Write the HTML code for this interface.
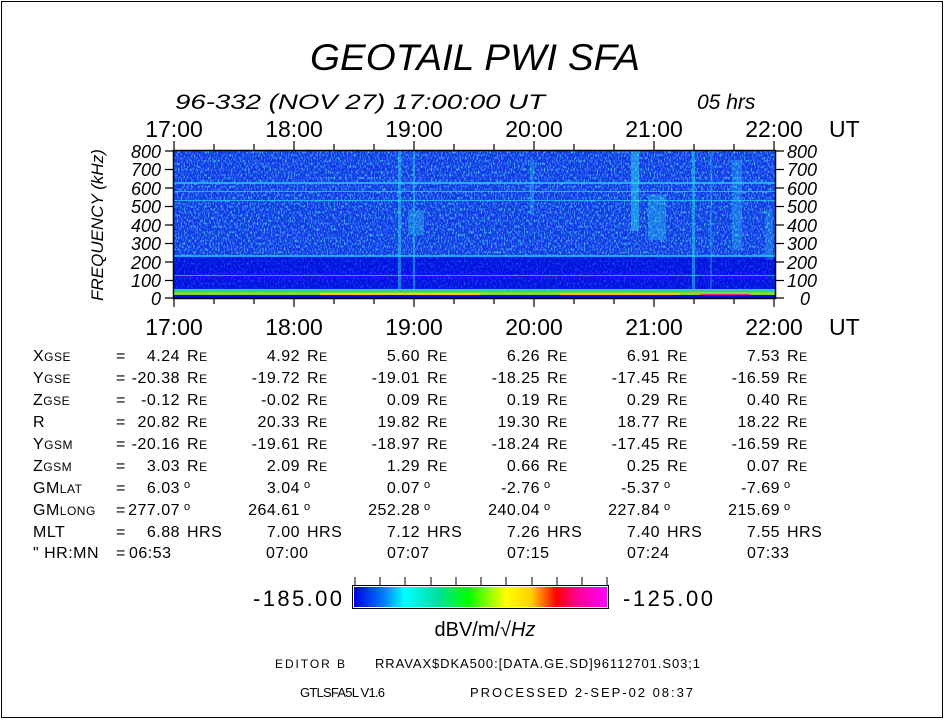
<!DOCTYPE html>
<html><head><meta charset="utf-8"><style>
html,body{margin:0;padding:0;background:#fff}
svg{display:block}
text{font-family:"Liberation Sans",sans-serif;fill:#000}
.t{font-size:23px}
.i{font-style:italic}
.d{font-size:16px;letter-spacing:0.5px}
</style></head><body>
<svg width="945" height="720" viewBox="0 0 945 720" xmlns="http://www.w3.org/2000/svg">
<defs>
<linearGradient id="cb" x1="0" x2="1" y1="0" y2="0">
<stop offset="0" stop-color="#0000e0"/>
<stop offset="0.12" stop-color="#0080ff"/>
<stop offset="0.2" stop-color="#00ffff"/>
<stop offset="0.33" stop-color="#00e0a0"/>
<stop offset="0.45" stop-color="#00ff00"/>
<stop offset="0.6" stop-color="#ffff00"/>
<stop offset="0.7" stop-color="#ffd000"/>
<stop offset="0.8" stop-color="#ff0000"/>
<stop offset="0.88" stop-color="#ff0090"/>
<stop offset="1" stop-color="#ff00ff"/>
</linearGradient>
<filter id="nz" x="0" y="0" width="1" height="1">
<feTurbulence type="fractalNoise" baseFrequency="0.7 0.35" numOctaves="2" seed="3"/>
<feColorMatrix values="0 0 0 0 0.1  0 0 0 0 0.75  0 0 0 0 1  0 0 0 3.2 -1.5"/>
</filter>
</defs>
<rect x="1.5" y="1.5" width="941" height="716" fill="none" stroke="#000" stroke-width="1"/>

<text x="475" y="70" text-anchor="middle" class="i" font-size="37" textLength="330" lengthAdjust="spacingAndGlyphs">GEOTAIL  PWI  SFA</text>
<text x="175" y="109" class="i" font-size="21" textLength="370" lengthAdjust="spacingAndGlyphs">96-332  (NOV 27)  17:00:00  UT</text>
<text x="697" y="109" class="i" font-size="21">05  hrs</text>

<g text-anchor="middle">
<text x="174" y="137" class="t">17:00</text><text x="294" y="137" class="t">18:00</text><text x="414" y="137" class="t">19:00</text><text x="534" y="137" class="t">20:00</text><text x="654" y="137" class="t">21:00</text><text x="774" y="137" class="t">22:00</text>
<text x="174" y="335" class="t">17:00</text><text x="294" y="335" class="t">18:00</text><text x="414" y="335" class="t">19:00</text><text x="534" y="335" class="t">20:00</text><text x="654" y="335" class="t">21:00</text><text x="774" y="335" class="t">22:00</text>
</g>
<text x="829" y="137" class="t">UT</text>
<text x="829" y="335" class="t">UT</text>

<!-- spectrogram -->
<rect x="174" y="151" width="601" height="105" fill="#1238e4"/>
<rect x="174" y="151" width="601" height="105" filter="url(#nz)" opacity="0.8"/>
<rect x="174" y="256" width="601" height="37" fill="#0010e0"/>
<rect x="174" y="256" width="601" height="37" filter="url(#nz)" opacity="0.3"/>
<g fill="#20c8f0" opacity="0.8">
<rect x="174" y="182" width="601" height="2"/>
<rect x="174" y="191" width="601" height="1"/>
<rect x="174" y="200" width="601" height="1"/>
<rect x="174" y="255" width="601" height="2"/>
<rect x="174" y="275" width="601" height="1"/>
</g>
<g fill="#30e8f0" opacity="0.45">
<rect x="398" y="151" width="3" height="142"/>
<rect x="413" y="151" width="2" height="142"/>
<rect x="408" y="210" width="16" height="25" opacity="0.6"/>
<rect x="530" y="160" width="4" height="55" opacity="0.6"/>
<rect x="631" y="151" width="8" height="80"/>
<rect x="648" y="195" width="18" height="45" opacity="0.7"/>
<rect x="692" y="151" width="3" height="142"/>
<rect x="710" y="151" width="2" height="142" opacity="0.6"/>
<rect x="732" y="160" width="10" height="90" opacity="0.6"/>
<rect x="765" y="210" width="8" height="50" opacity="0.5"/>
</g>
<rect x="174" y="289" width="601" height="4" fill="#30c8b0"/>
<rect x="174" y="292" width="601" height="3" fill="#80d840"/>
<rect x="320" y="293" width="160" height="2" fill="#e8d020"/>
<rect x="560" y="293" width="120" height="2" fill="#e8c820"/>
<rect x="700" y="294" width="50" height="2" fill="#ff2080"/>
<rect x="174" y="295" width="601" height="3" fill="#0010e0"/>
<rect x="173.5" y="150.5" width="602" height="148" fill="none" stroke="#000" stroke-width="1.5"/>

<g stroke="#000" stroke-width="1.2">
<path d="M174 141V150M214 144V150M254 144V150M294 141V150M334 144V150M374 144V150M414 141V150M454 144V150M494 144V150M534 141V150M574 144V150M614 144V150M654 141V150M694 144V150M734 144V150M774 141V150"/>
<path d="M174 298V307M214 298V304M254 298V304M294 298V307M334 298V304M374 298V304M414 298V307M454 298V304M494 298V304M534 298V307M574 298V304M614 298V304M654 298V307M694 298V304M734 298V304M774 298V307"/>
<path d="M165 151H174M165 169.5H174M165 188H174M165 206.5H174M165 225H174M165 243.5H174M165 262H174M165 280.5H174M165 298H174"/>
<path d="M775 151H784M775 169.5H784M775 188H784M775 206.5H784M775 225H784M775 243.5H784M775 262H784M775 280.5H784M775 298H784"/>
</g>
<g class="i" font-size="18" text-anchor="end">
<text x="161" y="158">800</text><text x="161" y="176">700</text><text x="161" y="195">600</text><text x="161" y="213">500</text><text x="161" y="232">400</text><text x="161" y="250">300</text><text x="161" y="269">200</text><text x="161" y="287">100</text><text x="161" y="305">0</text>
</g>
<g class="i" font-size="18">
<text x="787" y="158">800</text><text x="787" y="176">700</text><text x="787" y="195">600</text><text x="787" y="213">500</text><text x="787" y="232">400</text><text x="787" y="250">300</text><text x="787" y="269">200</text><text x="787" y="287">100</text><text x="800" y="305">0</text>
</g>
<text transform="translate(103,225) rotate(-90)" text-anchor="middle" class="i" font-size="17">FREQUENCY  (kHz)</text>

<g class="d">
<text x="33" y="361">X<tspan font-size="12">GSE</tspan></text>
<text x="33" y="383">Y<tspan font-size="12">GSE</tspan></text>
<text x="33" y="405">Z<tspan font-size="12">GSE</tspan></text>
<text x="33" y="427">R</text>
<text x="33" y="449">Y<tspan font-size="12">GSM</tspan></text>
<text x="33" y="471">Z<tspan font-size="12">GSM</tspan></text>
<text x="33" y="493">GM<tspan font-size="12">LAT</tspan></text>
<text x="33" y="515">GM<tspan font-size="12">LONG</tspan></text>
<text x="33" y="537">MLT</text>
<text x="33" y="558">"  HR:MN</text>
<text x="116" y="361">=</text><text x="116" y="383">=</text><text x="116" y="405">=</text><text x="116" y="427">=</text><text x="116" y="449">=</text><text x="116" y="471">=</text><text x="116" y="493">=</text><text x="116" y="515">=</text><text x="116" y="537">=</text><text x="116" y="558">=</text>
</g>
<g class="d" text-anchor="end">
<text x="180" y="361">4.24</text><text x="180" y="383">-20.38</text><text x="180" y="405">-0.12</text><text x="180" y="427">20.82</text><text x="180" y="449">-20.16</text><text x="180" y="471">3.03</text><text x="180" y="493">6.03</text><text x="180" y="515">277.07</text><text x="180" y="537">6.88</text>
<text x="300" y="361">4.92</text><text x="300" y="383">-19.72</text><text x="300" y="405">-0.02</text><text x="300" y="427">20.33</text><text x="300" y="449">-19.61</text><text x="300" y="471">2.09</text><text x="300" y="493">3.04</text><text x="300" y="515">264.61</text><text x="300" y="537">7.00</text>
<text x="420" y="361">5.60</text><text x="420" y="383">-19.01</text><text x="420" y="405">0.09</text><text x="420" y="427">19.82</text><text x="420" y="449">-18.97</text><text x="420" y="471">1.29</text><text x="420" y="493">0.07</text><text x="420" y="515">252.28</text><text x="420" y="537">7.12</text>
<text x="540" y="361">6.26</text><text x="540" y="383">-18.25</text><text x="540" y="405">0.19</text><text x="540" y="427">19.30</text><text x="540" y="449">-18.24</text><text x="540" y="471">0.66</text><text x="540" y="493">-2.76</text><text x="540" y="515">240.04</text><text x="540" y="537">7.26</text>
<text x="660" y="361">6.91</text><text x="660" y="383">-17.45</text><text x="660" y="405">0.29</text><text x="660" y="427">18.77</text><text x="660" y="449">-17.45</text><text x="660" y="471">0.25</text><text x="660" y="493">-5.37</text><text x="660" y="515">227.84</text><text x="660" y="537">7.40</text>
<text x="780" y="361">7.53</text><text x="780" y="383">-16.59</text><text x="780" y="405">0.40</text><text x="780" y="427">18.22</text><text x="780" y="449">-16.59</text><text x="780" y="471">0.07</text><text x="780" y="493">-7.69</text><text x="780" y="515">215.69</text><text x="780" y="537">7.55</text>
</g>
<g class="d">
<text x="187" y="361">R<tspan font-size="12">E</tspan></text><text x="187" y="383">R<tspan font-size="12">E</tspan></text><text x="187" y="405">R<tspan font-size="12">E</tspan></text><text x="187" y="427">R<tspan font-size="12">E</tspan></text><text x="187" y="449">R<tspan font-size="12">E</tspan></text><text x="187" y="471">R<tspan font-size="12">E</tspan></text><text x="184" y="488" font-size="11">o</text><text x="184" y="510" font-size="11">o</text><text x="187" y="537">HRS</text>
<text x="307" y="361">R<tspan font-size="12">E</tspan></text><text x="307" y="383">R<tspan font-size="12">E</tspan></text><text x="307" y="405">R<tspan font-size="12">E</tspan></text><text x="307" y="427">R<tspan font-size="12">E</tspan></text><text x="307" y="449">R<tspan font-size="12">E</tspan></text><text x="307" y="471">R<tspan font-size="12">E</tspan></text><text x="304" y="488" font-size="11">o</text><text x="304" y="510" font-size="11">o</text><text x="307" y="537">HRS</text>
<text x="427" y="361">R<tspan font-size="12">E</tspan></text><text x="427" y="383">R<tspan font-size="12">E</tspan></text><text x="427" y="405">R<tspan font-size="12">E</tspan></text><text x="427" y="427">R<tspan font-size="12">E</tspan></text><text x="427" y="449">R<tspan font-size="12">E</tspan></text><text x="427" y="471">R<tspan font-size="12">E</tspan></text><text x="424" y="488" font-size="11">o</text><text x="424" y="510" font-size="11">o</text><text x="427" y="537">HRS</text>
<text x="547" y="361">R<tspan font-size="12">E</tspan></text><text x="547" y="383">R<tspan font-size="12">E</tspan></text><text x="547" y="405">R<tspan font-size="12">E</tspan></text><text x="547" y="427">R<tspan font-size="12">E</tspan></text><text x="547" y="449">R<tspan font-size="12">E</tspan></text><text x="547" y="471">R<tspan font-size="12">E</tspan></text><text x="544" y="488" font-size="11">o</text><text x="544" y="510" font-size="11">o</text><text x="547" y="537">HRS</text>
<text x="667" y="361">R<tspan font-size="12">E</tspan></text><text x="667" y="383">R<tspan font-size="12">E</tspan></text><text x="667" y="405">R<tspan font-size="12">E</tspan></text><text x="667" y="427">R<tspan font-size="12">E</tspan></text><text x="667" y="449">R<tspan font-size="12">E</tspan></text><text x="667" y="471">R<tspan font-size="12">E</tspan></text><text x="664" y="488" font-size="11">o</text><text x="664" y="510" font-size="11">o</text><text x="667" y="537">HRS</text>
<text x="787" y="361">R<tspan font-size="12">E</tspan></text><text x="787" y="383">R<tspan font-size="12">E</tspan></text><text x="787" y="405">R<tspan font-size="12">E</tspan></text><text x="787" y="427">R<tspan font-size="12">E</tspan></text><text x="787" y="449">R<tspan font-size="12">E</tspan></text><text x="787" y="471">R<tspan font-size="12">E</tspan></text><text x="784" y="488" font-size="11">o</text><text x="784" y="510" font-size="11">o</text><text x="787" y="537">HRS</text>
<text x="129" y="558">06:53</text><text x="266" y="558">07:00</text><text x="387" y="558">07:07</text><text x="507" y="558">07:15</text><text x="627" y="558">07:24</text><text x="747" y="558">07:33</text>
</g>

<g stroke="#000" stroke-width="1">
<path d="M355 577V585M380 577V585M405 577V585M431 577V585M456 577V585M481 577V585M506 577V585M532 577V585M557 577V585M582 577V585M607 577V585"/>
</g>
<rect x="352.5" y="585.5" width="256" height="23" fill="#fff" stroke="#000" stroke-width="1"/>
<rect x="354" y="587" width="253" height="20" fill="url(#cb)"/>
<text x="253" y="606" font-size="22" textLength="89" lengthAdjust="spacing">-185.00</text>
<text x="623" y="606" font-size="22" textLength="90" lengthAdjust="spacing">-125.00</text>
<text x="485" y="636" text-anchor="middle" font-size="20">dBV/m/√<tspan font-style="italic">Hz</tspan></text>
<text x="275" y="668" font-size="12" textLength="70" lengthAdjust="spacing">EDITOR  B</text>
<text x="375" y="668" font-size="13" textLength="325" lengthAdjust="spacing">RRAVAX$DKA500:[DATA.GE.SD]96112701.S03;1</text>
<text x="300" y="697" font-size="13" textLength="85" lengthAdjust="spacing">GTLSFA5L  V1.6</text>
<text x="470" y="697" font-size="13" textLength="223" lengthAdjust="spacing">PROCESSED   2-SEP-02   08:37</text>
</svg>
</body></html>
